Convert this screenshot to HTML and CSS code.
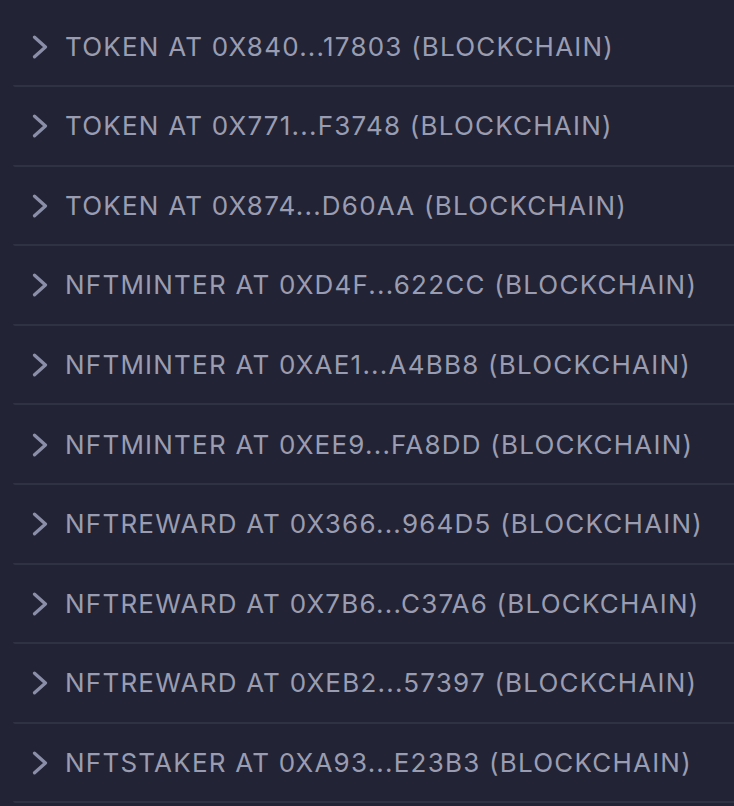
FILE: index.html
```html
<!DOCTYPE html>
<html>
<head>
<meta charset="utf-8">
<link rel="stylesheet" href="styles.css">
</head>
<body>
<ul class="list">
  <li class="item"><svg class="chev" viewBox="0 0 14 22"><path d="M2 2 L12 11 L2 20"/></svg><span class="label">TOKEN AT 0X840...17803 (BLOCKCHAIN)</span></li>
  <li class="item"><svg class="chev" viewBox="0 0 14 22"><path d="M2 2 L12 11 L2 20"/></svg><span class="label">TOKEN AT 0X771...F3748 (BLOCKCHAIN)</span></li>
  <li class="item"><svg class="chev" viewBox="0 0 14 22"><path d="M2 2 L12 11 L2 20"/></svg><span class="label">TOKEN AT 0X874...D60AA (BLOCKCHAIN)</span></li>
  <li class="item"><svg class="chev" viewBox="0 0 14 22"><path d="M2 2 L12 11 L2 20"/></svg><span class="label">NFTMINTER AT 0XD4F...622CC (BLOCKCHAIN)</span></li>
  <li class="item"><svg class="chev" viewBox="0 0 14 22"><path d="M2 2 L12 11 L2 20"/></svg><span class="label">NFTMINTER AT 0XAE1...A4BB8 (BLOCKCHAIN)</span></li>
  <li class="item"><svg class="chev" viewBox="0 0 14 22"><path d="M2 2 L12 11 L2 20"/></svg><span class="label">NFTMINTER AT 0XEE9...FA8DD (BLOCKCHAIN)</span></li>
  <li class="item"><svg class="chev" viewBox="0 0 14 22"><path d="M2 2 L12 11 L2 20"/></svg><span class="label">NFTREWARD AT 0X366...964D5 (BLOCKCHAIN)</span></li>
  <li class="item"><svg class="chev" viewBox="0 0 14 22"><path d="M2 2 L12 11 L2 20"/></svg><span class="label">NFTREWARD AT 0X7B6...C37A6 (BLOCKCHAIN)</span></li>
  <li class="item"><svg class="chev" viewBox="0 0 14 22"><path d="M2 2 L12 11 L2 20"/></svg><span class="label">NFTREWARD AT 0XEB2...57397 (BLOCKCHAIN)</span></li>
  <li class="item"><svg class="chev" viewBox="0 0 14 22"><path d="M2 2 L12 11 L2 20"/></svg><span class="label">NFTSTAKER AT 0XA93...E23B3 (BLOCKCHAIN)</span></li>
</ul>
</body>
</html>
```
FILE: styles.css
```css
html, body {
  margin: 0;
  padding: 0;
  background: #222334;
  overflow: hidden;
}
.list {
  list-style: none;
  margin: 0;
  padding: 7.4px 0 0 13px;
}
.item {
  display: flex;
  align-items: center;
  height: 77.6px;
  border-bottom: 2px solid #2f3243;
  border-bottom-left-radius: 2px;
  padding-left: 19px;
  box-sizing: content-box;
}
.chev {
  width: 16px;
  height: 24px;
  flex: none;
  fill: none;
  stroke: #8a8ea8;
  stroke-width: 3;
  stroke-linecap: round;
  stroke-linejoin: round;
  margin-top: 1px;
}
.label {
  margin-left: 17px;
  font-family: "Inter", "Liberation Sans", Arial, sans-serif;
  font-size: 26px;
  color: #9a9db1;
  white-space: nowrap;
  letter-spacing: 1.22px;
}
```
